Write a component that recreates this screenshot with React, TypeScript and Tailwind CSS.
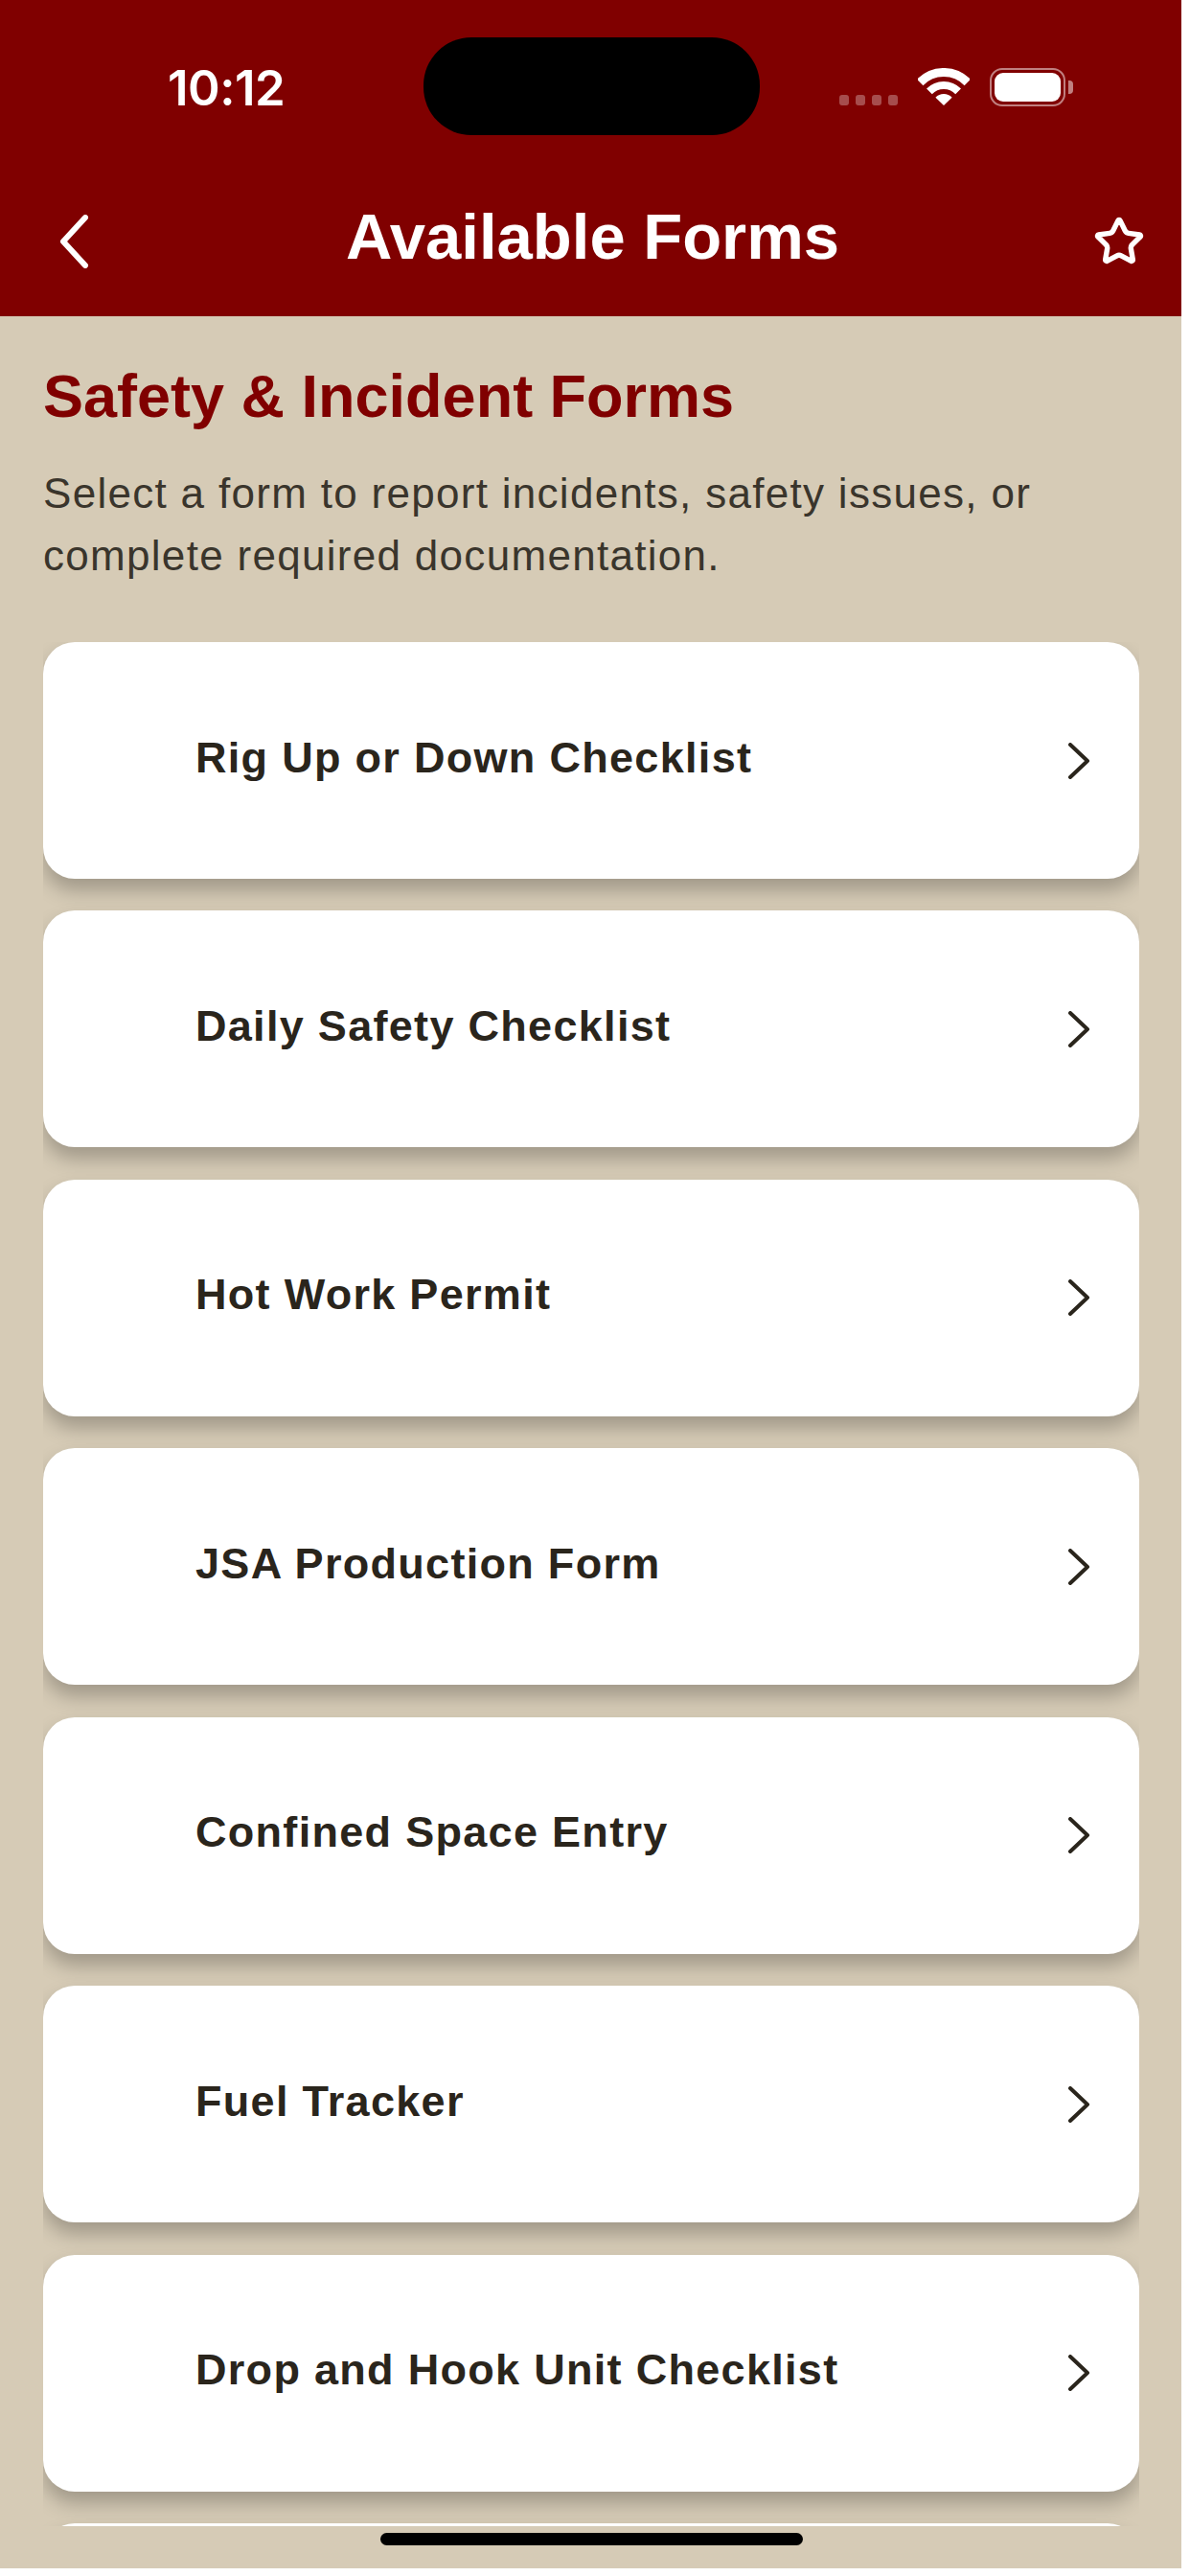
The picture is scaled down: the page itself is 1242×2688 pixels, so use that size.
import { Star } from 'lucide-react';

const forms = [
  'Rig Up or Down Checklist',
  'Daily Safety Checklist',
  'Hot Work Permit',
  'JSA Production Form',
  'Confined Space Entry',
  'Fuel Tracker',
  'Drop and Hook Unit Checklist',
];

const WifiIcon = () => (
  <svg width="54" height="39" viewBox="0 0 54 39" fill="none" className="text-white">
    <path d="M2.2 15 A34.5 34.5 0 0 1 51.8 15" stroke="currentColor" strokeWidth="9" />
    <path d="M11.9 24.4 A21 21 0 0 1 42.1 24.4" stroke="currentColor" strokeWidth="8" />
    <path d="M27 39 L18.4 30.7 A12 12 0 0 1 35.6 30.7 Z" fill="currentColor" />
  </svg>
);

const BatteryIcon = () => (
  <div className="flex items-center gap-[3px]">
    <div className="w-[79px] h-[40px] rounded-[13px] border-[2px] border-white/50 p-[3px]">
      <div className="w-full h-full rounded-[9px] bg-white" />
    </div>
    <div className="w-[5px] h-[14px] rounded-r-[4px] bg-white/50" />
  </div>
);

const SignalDots = () => (
  <div className="flex gap-[6.5px] mt-[28px]">
    {[0, 1, 2, 3].map((i) => (
      <div key={i} className="w-[10.5px] h-[10.5px] rounded-[3px] bg-white/30" />
    ))}
  </div>
);

const FormCard = ({ title }: { title?: string }) => (
  <div className="flex items-center justify-between shrink-0 h-[247px] rounded-[33px] bg-white pl-[159px] pr-[50px] shadow-[0_12px_20px_rgba(0,0,0,0.25)]">
    <span className="text-[45px] leading-[52px] font-bold tracking-[1.3px] text-[#2a251c] mb-[6px]">{title}</span>
    <svg width="26" height="38" viewBox="0 0 26 38" fill="none">
      <polyline points="4,2 22,19 4,36" stroke="#2a251c" strokeWidth="4" strokeLinecap="round" strokeLinejoin="round" />
    </svg>
  </div>
);

export default function App() {
  return (
    <div className="w-[1242px] h-[2688px] bg-white font-['Liberation_Sans',Arial,sans-serif]">
      <div className="relative flex flex-col w-[1233px] h-[2680px] bg-[#d6cbb6]">
        <header className="shrink-0 h-[330px] bg-[#800000]">
          <div className="relative flex items-center h-[182px] pl-[175px] pr-[113px]">
            <span className="font-['Inter',sans-serif] text-[51px] font-semibold leading-none text-white tracking-[-0.5px]">10:12</span>
            <div className="absolute left-[442px] top-[39px] w-[351px] h-[102px] rounded-[50px] bg-black" />
            <div className="ml-auto flex items-start gap-[21px]">
              <SignalDots />
              <WifiIcon />
              <BatteryIcon />
            </div>
          </div>
          <div className="flex items-center justify-between h-[96px] mt-[22px] pl-[60px] pr-[38px]">
            <svg width="36" height="56" viewBox="0 0 36 56" fill="none">
              <polyline points="29,3 6,28 29,53" stroke="white" strokeWidth="6" strokeLinecap="round" strokeLinejoin="round" />
            </svg>
            <h1 className="text-[67px] font-bold leading-none text-white -mt-[12px]">Available Forms</h1>
            <Star size={54} strokeWidth={2.4} className="text-white" />
          </div>
        </header>

        <main className="flex flex-col pl-[45px] pr-[44px] pt-[47px]">
          <h2 className="text-[63px] font-bold leading-[72px] text-[#800000]">Safety &amp; Incident Forms</h2>
          <p className="mt-[33px] text-[44px] leading-[65px] tracking-[1.3px] text-[#3a352c]">
            Select a form to report incidents, safety issues, or complete required documentation.
          </p>
          <div className="flex flex-col gap-[33.43px] mt-[58px] h-[1966px] overflow-hidden">
            {forms.map((title) => (
              <FormCard key={title} title={title} />
            ))}
            <FormCard />
          </div>
        </main>

        <div className="absolute left-[397px] bottom-[24px] w-[441px] h-[13px] rounded-full bg-black" />
      </div>
    </div>
  );
}
